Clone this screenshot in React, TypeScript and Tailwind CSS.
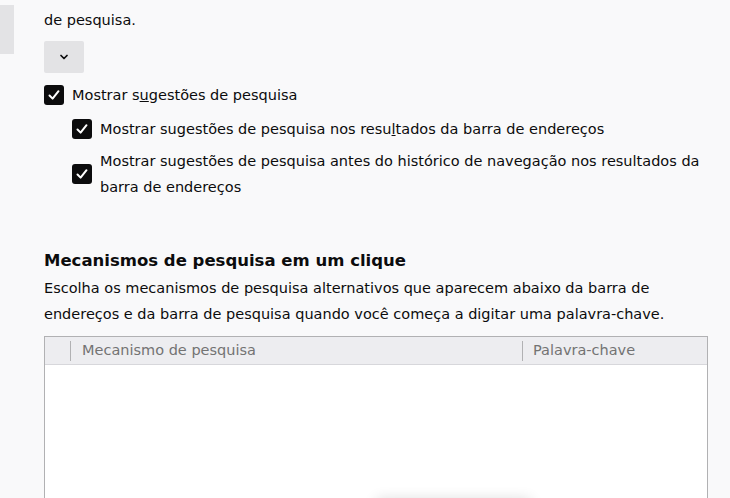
import { ChevronDown } from "lucide-react";
import type { ReactNode } from "react";

function CheckBox() {
  return (
    <span className="flex size-[20px] shrink-0 items-center justify-center rounded-[3px] bg-[#0c0c0d]">
      <svg width="14" height="14" viewBox="0 0 14 14" fill="none">
        <path d="M2.5 7.5 L5.6 10.6 L11.5 3.2" stroke="white" strokeWidth="2" strokeLinecap="round" strokeLinejoin="round" />
      </svg>
    </span>
  );
}

function CheckRow({ children, className = "" }: { children: ReactNode; className?: string }) {
  return (
    <label className={`flex items-center gap-[8px] ${className}`}>
      <CheckBox />
      <span className="leading-[26px]">{children}</span>
    </label>
  );
}

export default function App() {
  return (
    <div
      className="flex h-[498px] overflow-hidden bg-[#f9f9fa] text-[14.5px] text-[#0c0c0d]"
      style={{ fontFamily: '"DejaVu Sans", sans-serif' }}
    >
      {/* sidebar stub */}
      <div className="w-[14px] shrink-0">
        <div className="mt-[5px] h-[49px] bg-[#e3e3e5]" />
      </div>

      <main className="w-[664px] shrink-0 pl-[30px] pt-[7px]" style={{ boxSizing: "content-box" }}>
        <p className="leading-[26px]">de pesquisa.</p>

        <button className="mt-[8px] flex h-[32px] w-[40px] items-center justify-center rounded-[2px] bg-[#e3e3e5]">
          <ChevronDown className="size-[12px]" strokeWidth={3.5} />
        </button>

        <CheckRow className="mt-[9px]">
          Mostrar s<u>u</u>gestões de pesquisa
        </CheckRow>
        <CheckRow className="ml-[28px] mt-[8px]">
          Mostrar sugestões de pesquisa nos resu<u>l</u>tados da barra de endereços
        </CheckRow>
        <CheckRow className="ml-[28px] mt-[6px]">
          Mostrar sugestões de pesquisa antes do histórico de navegação nos resultados da barra de endereços
        </CheckRow>

        <h2 className="mt-[49px] text-[16.5px] font-bold leading-[24px]">Mecanismos de pesquisa em um clique</h2>
        <p className="mt-[2px] leading-[26px]">
          Escolha os mecanismos de pesquisa alternativos que aparecem abaixo da barra de endereços e da barra de
          pesquisa quando você começa a digitar uma palavra-chave.
        </p>

        <div className="relative mt-[9px] border border-[#b1b1b3] bg-white">
          <div className="flex h-[28px] items-center border-b border-[#d7d7db] bg-[#ededf0] text-[#737373]">
            <div className="w-[25px]" />
            <div className="flex flex-1 items-center">
              <span className="h-[20px] w-px bg-[#b1b1b3]" />
              <span className="pl-[11px]">Mecanismo de pesquisa</span>
            </div>
            <div className="flex w-[185px] items-center">
              <span className="h-[20px] w-px bg-[#b1b1b3]" />
              <span className="pl-[10px]">Palavra-chave</span>
            </div>
          </div>
          <div className="h-[300px]" />
          <div className="absolute left-[331px] top-[162px] h-[40px] w-[155px] rounded-[4px] bg-white shadow-[0_0_14px_rgba(0,0,0,0.14)]" />
        </div>
      </main>
    </div>
  );
}
